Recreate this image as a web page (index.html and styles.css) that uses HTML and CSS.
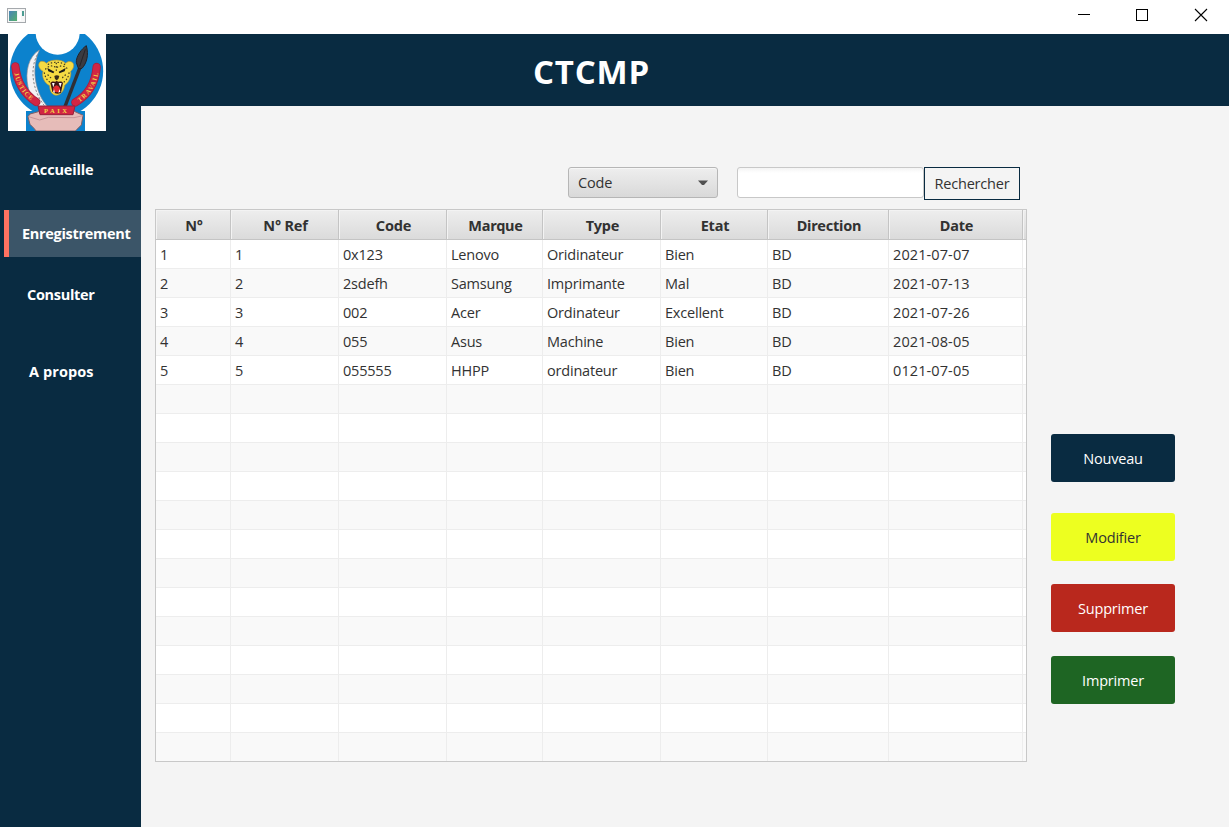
FILE: index.html
```html
<!DOCTYPE html>
<html lang="fr">
<head>
<meta charset="utf-8">
<title>CTCMP</title>
<link rel="stylesheet" href="styles.css">
</head>
<body>
<div class="titlebar">
  <svg class="app-icon" width="19" height="15" viewBox="0 0 19 15">
    <defs><linearGradient id="ic" x1="0" y1="0" x2="1" y2="1"><stop offset="0" stop-color="#4a83b8"/><stop offset="1" stop-color="#55b06c"/></linearGradient></defs>
    <rect x=".5" y=".5" width="18" height="14" fill="#f7f7f7" stroke="#a5a9ad"/>
    <rect x="2" y="3" width="8" height="10" fill="url(#ic)"/>
    <rect x="11" y="3" width="3" height="10" fill="#fff"/>
    <rect x="15" y="3" width="2" height="5" fill="#4c9d92"/>
  </svg>
  <svg class="win-controls" width="140" height="14" viewBox="0 0 140 14" fill="none" stroke="#000" shape-rendering="crispEdges">
    <path d="M8 6.500H20"/><path d="M66.500 1.500H77.500V12.500H66.500Z"/>
    <path d="M125 1L137 13M137 1L125 13" shape-rendering="auto" stroke-width="1.100"/>
  </svg>
</div>
<div class="app">
  <nav class="sidebar">
    <svg class="logo" width="98" height="97" viewBox="24 102 294 291">
      <rect x="24" y="102" width="294" height="291" fill="#fff"/>
      <circle cx="169.500" cy="213" r="140" fill="#0c82cd"/>
      <path d="M24 333H78V393H24ZM255 333H318V393H255Z" fill="#fff"/>
      <rect x="78" y="333" width="177" height="60" fill="#0c82cd"/>
      <circle cx="173" cy="98" r="66" fill="#fff"/>
      <path d="M118 150C85 170 75 215 84 260C91 290 104 307 121 322L143 320C110 285 90 215 118 150Z" fill="#f4f2f4" stroke="#8b8d94" stroke-width="2"/>
      <path d="M112 164C88 208 98 272 133 317" fill="none" stroke="#555" stroke-width="2" stroke-dasharray="7 5"/>
      <path d="M240 202L194 322" stroke="#302f34" stroke-width="10"/>
      <path d="M259 137C246 145 227 170 229 188L236 207L246 205C260 190 267 165 259 137Z" fill="#3b3b40" stroke="#222228" stroke-width="3"/>
      <path d="M256 148L239 199" stroke="#242328" stroke-width="3"/>
      <path d="M118 188C123 181 134 184 139 190C152 178 184 176 197 190C205 181 218 183 221 194C222 204 216 210 212 214C215 232 204 250 194 256C191 275 181 286 168 286C155 284 149 272 149 257C134 250 124 231 129 214C119 208 113 197 118 188Z" fill="#f5db43" stroke="#b59838" stroke-width="2"/>
      <path d="M142 204L163 215L160 220L145 214ZM197 204L176 215L178 220L194 214Z" fill="#191919"/>
      <path d="M163 228Q170 223 178 228L175 237L170 241L165 237Z" fill="#352b19"/>
      <path d="M151 249C160 239 163 250 170 242C178 250 182 239 189 249L183 278Q170 286 157 275Z" fill="#3d1515"/>
      <path d="M159 265Q170 246 180 265L178 275Q169 280 161 273Z" fill="#e22c31"/>
      <path d="M156 249L160 262L164 249M176 249L181 262L185 249M159 277L162 267L165 278M175 278L179 267L181 275" fill="#fff"/>
      <g fill="none" stroke="#48411f" stroke-width="4" stroke-linecap="round" stroke-dasharray="1 9">
        <path d="M145 193C160 184 181 185 195 194"/><path d="M137 207C145 198 158 193 169 204C180 194 195 197 204 208"/><path d="M133 219C137 235 142 241 149 246"/><path d="M207 219C205 233 199 240 191 247"/><path d="M144 225L155 236M196 225L184 236"/><path d="M169 190V220"/>
      </g>
      <path d="M46 199C51 246 71 281 109 306" fill="none" stroke="#a8203b" stroke-width="25" stroke-linecap="round"/>
      <path d="M46 199C51 246 71 281 109 306" fill="none" stroke="#d12543" stroke-width="20" stroke-linecap="round"/>
      <path d="M290 201C286 249 268 283 226 307" fill="none" stroke="#a8203b" stroke-width="25" stroke-linecap="round"/>
      <path d="M290 201C286 249 268 283 226 307" fill="none" stroke="#d12543" stroke-width="20" stroke-linecap="round"/>
      <path id="justice" d="M43 220C51 257 68 285 104 310" fill="none"/>
      <path id="travail" d="M238 307C273 282 290 257 296 211" fill="none"/>
      <text class="motto"><textPath href="#justice" textLength="98">JUSTICE</textPath></text>
      <text class="motto"><textPath href="#travail" textLength="108">TRAVAIL</textPath></text>
      <path d="M90 342L119 334L223 334L249 346L244 375L231 388L226 393H108L103 386L90 373L84 350Z" fill="#e6bcb9" stroke="#856064" stroke-width="3"/>
      <path d="M86 350L119 360L145 352L222 353L249 347" fill="none" stroke="#c89599" stroke-width="3"/>
      <path d="M114 318H225L219 344H120Z" fill="#d12543" stroke="#97213a" stroke-width="3"/>
      <text class="motto paix" x="132" y="338" textLength="69">PAIX</text>
    </svg>
    <a class="nav home">Accueille</a>
    <a class="nav active">Enregistrement</a>
    <a class="nav consult">Consulter</a>
    <a class="nav about">A propos</a>
  </nav>
  <div class="main">
    <header class="header"><h1>CTCMP</h1></header>
    <div class="content">
      <section class="records">
        <div class="search">
          <div class="combo"><span>Code</span><svg width="10" height="6" viewBox="0 0 10 6"><path d="M0 .5H10L6 5H4Z" fill="#505050"/></svg></div>
          <input class="query" type="text" aria-label="Recherche">
          <button class="find">Rechercher</button>
        </div>
        <div class="table">
          <div class="row head"><b>N°</b><b>N° Ref</b><b>Code</b><b>Marque</b><b>Type</b><b>Etat</b><b>Direction</b><b>Date</b><b></b></div>
          <div class="row"><span>1</span><span>1</span><span>0x123</span><span>Lenovo</span><span>Oridinateur</span><span>Bien</span><span>BD</span><span class="date">2021-07-07</span><span></span></div>
          <div class="row"><span>2</span><span>2</span><span>2sdefh</span><span>Samsung</span><span>Imprimante</span><span>Mal</span><span>BD</span><span class="date">2021-07-13</span><span></span></div>
          <div class="row"><span>3</span><span>3</span><span>002</span><span>Acer</span><span>Ordinateur</span><span>Excellent</span><span>BD</span><span class="date">2021-07-26</span><span></span></div>
          <div class="row"><span>4</span><span>4</span><span>055</span><span>Asus</span><span>Machine</span><span>Bien</span><span>BD</span><span class="date">2021-08-05</span><span></span></div>
          <div class="row"><span>5</span><span>5</span><span>055555</span><span>HHPP</span><span>ordinateur</span><span>Bien</span><span>BD</span><span class="date">0121-07-05</span><span></span></div>
          <div class="row"><span></span><span></span><span></span><span></span><span></span><span></span><span></span><span></span><span></span></div>
          <div class="row"><span></span><span></span><span></span><span></span><span></span><span></span><span></span><span></span><span></span></div>
          <div class="row"><span></span><span></span><span></span><span></span><span></span><span></span><span></span><span></span><span></span></div>
          <div class="row"><span></span><span></span><span></span><span></span><span></span><span></span><span></span><span></span><span></span></div>
          <div class="row"><span></span><span></span><span></span><span></span><span></span><span></span><span></span><span></span><span></span></div>
          <div class="row"><span></span><span></span><span></span><span></span><span></span><span></span><span></span><span></span><span></span></div>
          <div class="row"><span></span><span></span><span></span><span></span><span></span><span></span><span></span><span></span><span></span></div>
          <div class="row"><span></span><span></span><span></span><span></span><span></span><span></span><span></span><span></span><span></span></div>
          <div class="row"><span></span><span></span><span></span><span></span><span></span><span></span><span></span><span></span><span></span></div>
          <div class="row"><span></span><span></span><span></span><span></span><span></span><span></span><span></span><span></span><span></span></div>
          <div class="row"><span></span><span></span><span></span><span></span><span></span><span></span><span></span><span></span><span></span></div>
          <div class="row"><span></span><span></span><span></span><span></span><span></span><span></span><span></span><span></span><span></span></div>
          <div class="row"><span></span><span></span><span></span><span></span><span></span><span></span><span></span><span></span><span></span></div>
        </div>
      </section>
      <aside class="actions">
        <button class="btn new">Nouveau</button>
        <button class="btn edit">Modifier</button>
        <button class="btn delete">Supprimer</button>
        <button class="btn print">Imprimer</button>
      </aside>
    </div>
  </div>
</div>
</body>
</html>
```
FILE: styles.css
```css
* { box-sizing: border-box; }
body { margin: 0; height: 827px; overflow: hidden; font: 14.5px/20px "Open Sans", "Noto Sans", sans-serif; letter-spacing: -0.2px; color: #323232; background: #f4f4f4; }
button, input { font: inherit; letter-spacing: inherit; color: inherit; margin: 0; padding: 0; }
.titlebar { height: 34px; background: #fff; display: flex; justify-content: space-between; align-items: flex-start; padding: 8px 19px 0 7px; }
.app { display: flex; height: 793px; }
.sidebar { width: 141px; background: #092b41; display: flex; flex-direction: column; flex-shrink: 0; }
.logo { margin-left: 8px; display: block; flex-shrink: 0; }
.motto { font: bold 19px "Liberation Serif", serif; fill: #f0d448; letter-spacing: 0; }
.paix { font-size: 20px; }
.nav { height: 47px; line-height: 47px; color: #fff; font-weight: 700; font-size: 14.5px; letter-spacing: -0.3px; white-space: nowrap; }
.home { margin-top: 15px; padding-left: 30px; letter-spacing: -0.15px; }
.active { margin: 17px 0 0 4px; padding-left: 13px; border-left: 5px solid #ff7261; background: #3b5568; }
.consult { margin-top: 14px; padding-left: 27px; }
.about { margin-top: 30px; padding-left: 29px; letter-spacing: 0.1px; }
.main { flex: 1; }
.header { height: 72px; background: #092b41; }
.header h1 { margin: 0; padding-left: 392px; color: #fff; font-size: 33px; line-height: 76px; letter-spacing: 0.8px; }
.content { display: flex; padding: 61px 0 0 14px; }
.records { width: 872px; }
.search { height: 42px; display: flex; align-items: flex-start; padding-left: 413px; }
.combo { width: 150px; height: 31px; display: flex; justify-content: space-between; align-items: center; padding: 0 9px; border: 1px solid #b6b6b6; border-radius: 3px; background: linear-gradient(#eee, #d9d9d9); box-shadow: inset 0 1px #f6f6f6; }
.query { width: 187px; height: 31px; margin-left: 19px; border: 1px solid #c8c8c8; border-radius: 3px; background: linear-gradient(#f4f4f4, #fff 5px); }
.find { width: 96px; height: 33px; border: 1px solid #092b41; background: #f4f4f4; }
.table { border: 1px solid #c8c8c8; height: 553px; overflow: hidden; background: #fff; }
.row { display: grid; grid-template-columns: 75px 108px 108px 96px 118px 107px 121px 134px 1fr; grid-template-rows: 100%; height: 29px; background: #fff; }
.row > span { border-right: 1px solid #ededed; border-bottom: 1px solid #ededed; padding-left: 4px; line-height: 29px; white-space: nowrap; }
.row:nth-child(odd) { background: #f9f9f9; }
.row > .date { letter-spacing: 0.1px; }
.row > :last-child { border-right: 0; padding: 0; }
.head.row { height: 30px; background: linear-gradient(#eee, #dadada); }
.head b { border-right: 1px solid #c4c4c4; border-bottom: 1px solid #c4c4c4; box-shadow: inset 1px 1px #f3f3f3; padding-left: 2px; text-align: center; line-height: 31px; font-family: "Noto Sans", "Open Sans", sans-serif; }
.actions { margin-left: 24px; padding-top: 267px; display: flex; flex-direction: column; }
.btn { width: 124px; height: 48px; border: 0; border-radius: 3px; padding-top: 2px; color: #fff; }
.new { background: #092b41; }
.edit { margin-top: 31px; color: #323232; background: #edff20; }
.delete { margin-top: 23px; background: #b9281d; }
.print { margin-top: 24px; background: #1e6523; }
```
